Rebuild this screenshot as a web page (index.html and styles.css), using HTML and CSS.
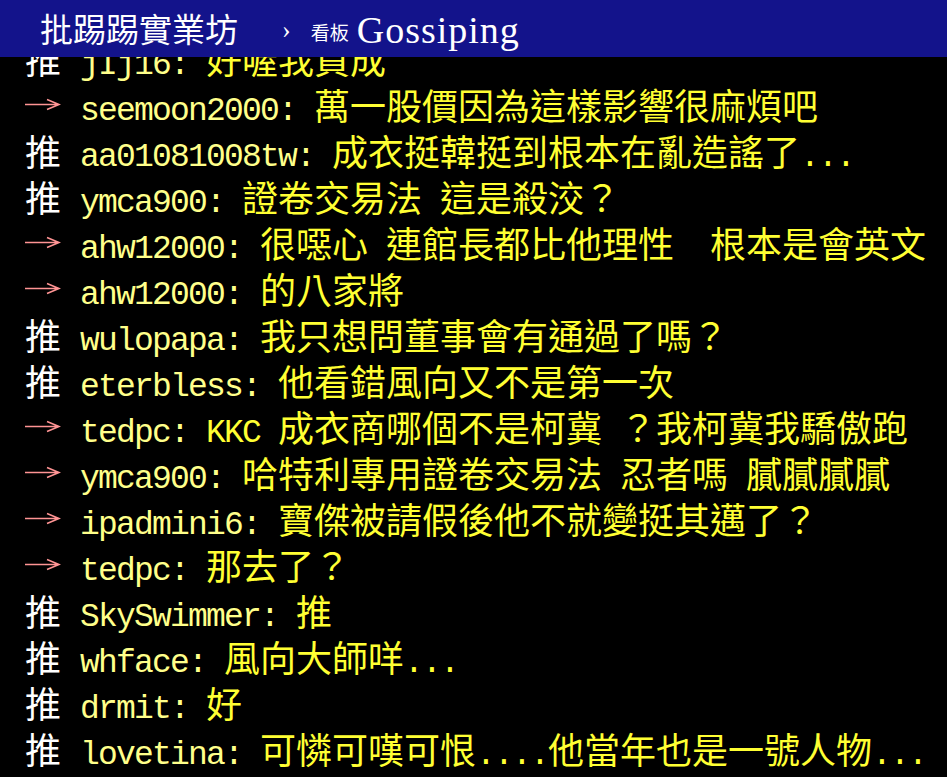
FILE: index.html
```html
<!DOCTYPE html>
<html lang="zh-Hant">
<head>
<meta charset="utf-8">
<title>批踢踢實業坊 › 看板 Gossiping</title>
<link rel="stylesheet" href="styles.css">
</head>
<body>
<div class="page">
  <div class="topbar">
    <span class="site">批踢踢實業坊</span>
    <span class="sep">›</span>
    <span class="board-label">看板</span>
    <span class="board">Gossiping</span>
  </div>
  <div class="viewport">
  <div class="pushes">
    <div class="row"><span class="tag good">推</span><span class="uid">jIj16:</span> <span class="txt"><span class="c">好喔我買成</span></span></div>
    <div class="row"><span class="tag arrow"><svg class="arr" width="36" height="46" viewBox="0 0 36 46"><path d="M0 23.5H34M22 18.5L34 23.5L22 28.5"/></svg></span><span class="uid">seemoon2000:</span> <span class="txt"><span class="c">萬一股價因為這樣影響很麻煩吧</span></span></div>
    <div class="row"><span class="tag good">推</span><span class="uid">aa01081008tw:</span> <span class="txt"><span class="c">成衣挺韓挺到根本在亂造謠了</span>...</span></div>
    <div class="row"><span class="tag good">推</span><span class="uid">ymca900:</span> <span class="txt"><span class="c">證卷交易法</span> <span class="c">這是殺洨？</span></span></div>
    <div class="row"><span class="tag arrow"><svg class="arr" width="36" height="46" viewBox="0 0 36 46"><path d="M0 23.5H34M22 18.5L34 23.5L22 28.5"/></svg></span><span class="uid">ahw12000:</span> <span class="txt"><span class="c">很噁心</span> <span class="c">連館長都比他理性　根本是會英文</span></span></div>
    <div class="row"><span class="tag arrow"><svg class="arr" width="36" height="46" viewBox="0 0 36 46"><path d="M0 23.5H34M22 18.5L34 23.5L22 28.5"/></svg></span><span class="uid">ahw12000:</span> <span class="txt"><span class="c">的八家將</span></span></div>
    <div class="row"><span class="tag good">推</span><span class="uid">wulopapa:</span> <span class="txt"><span class="c">我只想問董事會有通過了嗎？</span></span></div>
    <div class="row"><span class="tag good">推</span><span class="uid">eterbless:</span> <span class="txt"><span class="c">他看錯風向又不是第一次</span></span></div>
    <div class="row"><span class="tag arrow"><svg class="arr" width="36" height="46" viewBox="0 0 36 46"><path d="M0 23.5H34M22 18.5L34 23.5L22 28.5"/></svg></span><span class="uid">tedpc:</span> <span class="txt">KKC <span class="c">成衣商哪個不是柯冀</span> <span class="c">？我柯冀我驕傲跑</span></span></div>
    <div class="row"><span class="tag arrow"><svg class="arr" width="36" height="46" viewBox="0 0 36 46"><path d="M0 23.5H34M22 18.5L34 23.5L22 28.5"/></svg></span><span class="uid">ymca900:</span> <span class="txt"><span class="c">哈特利專用證卷交易法</span> <span class="c">忍者嗎</span> <span class="c">膩膩膩膩</span></span></div>
    <div class="row"><span class="tag arrow"><svg class="arr" width="36" height="46" viewBox="0 0 36 46"><path d="M0 23.5H34M22 18.5L34 23.5L22 28.5"/></svg></span><span class="uid">ipadmini6:</span> <span class="txt"><span class="c">寶傑被請假後他不就變挺其邁了？</span></span></div>
    <div class="row"><span class="tag arrow"><svg class="arr" width="36" height="46" viewBox="0 0 36 46"><path d="M0 23.5H34M22 18.5L34 23.5L22 28.5"/></svg></span><span class="uid">tedpc:</span> <span class="txt"><span class="c">那去了？</span></span></div>
    <div class="row"><span class="tag good">推</span><span class="uid">SkySwimmer:</span> <span class="txt"><span class="c">推</span></span></div>
    <div class="row"><span class="tag good">推</span><span class="uid">whface:</span> <span class="txt"><span class="c">風向大師咩</span>...</span></div>
    <div class="row"><span class="tag good">推</span><span class="uid">drmit:</span> <span class="txt"><span class="c">好</span></span></div>
    <div class="row"><span class="tag good">推</span><span class="uid">lovetina:</span> <span class="txt"><span class="c">可憐可嘆可恨</span>....<span class="c">他當年也是一號人物</span>...</span></div>
  </div>
  </div>
</div>
</body>
</html>
```

FILE: styles.css
```css
html, body {
  margin: 0;
  padding: 0;
  background: #000;
}

.page {
  width: 947px;
  height: 777px;
  overflow: hidden;
  background: #000;
  display: flex;
  flex-direction: column;
}

.topbar {
  flex: 0 0 57px;
  height: 57px;
  background: #13138b;
  display: flex;
  align-items: center;
  padding-left: 40px;
  color: #fff;
  white-space: nowrap;
}

.site {
  font-family: "Noto Sans CJK TC", sans-serif;
  font-size: 33px;
  line-height: 1;
}

.sep {
  font-family: "Liberation Serif", serif;
  font-size: 26px;
  margin-left: 44px;
  margin-right: 20px;
  position: relative;
  top: 1px;
}

.board-label {
  font-family: "Noto Sans CJK TC", sans-serif;
  font-size: 19px;
  margin-right: 8px;
  position: relative;
  top: 3px;
}

.board {
  font-family: "Liberation Serif", serif;
  font-size: 38px;
  letter-spacing: 1px;
  position: relative;
  top: 1px;
}

.viewport {
  flex: 1 1 auto;
  overflow: hidden;
}

.pushes {
  margin-top: -22px;
  padding-left: 25px;
}

.row {
  height: 46px;
  line-height: 46px;
  white-space: nowrap;
  font-family: "Liberation Mono", "Noto Sans CJK TC", monospace;
  font-size: 33px;
  letter-spacing: -1.8px;
}

.c {
  font-family: "Noto Sans CJK TC", sans-serif;
  font-size: 36px;
  letter-spacing: 0;
}

.tag {
  display: inline-block;
  width: 55px;
  height: 46px;
  vertical-align: top;
  font-family: "Noto Sans CJK TC", sans-serif;
  font-size: 36px;
  letter-spacing: 0;
}

.tag.good {
  color: #ffffff;
}

.arr {
  display: block;
  fill: none;
  stroke: #ff9494;
  stroke-width: 1.6;
}

.uid {
  color: #ffff8a;
}

.txt {
  color: #ffff33;
}
```
